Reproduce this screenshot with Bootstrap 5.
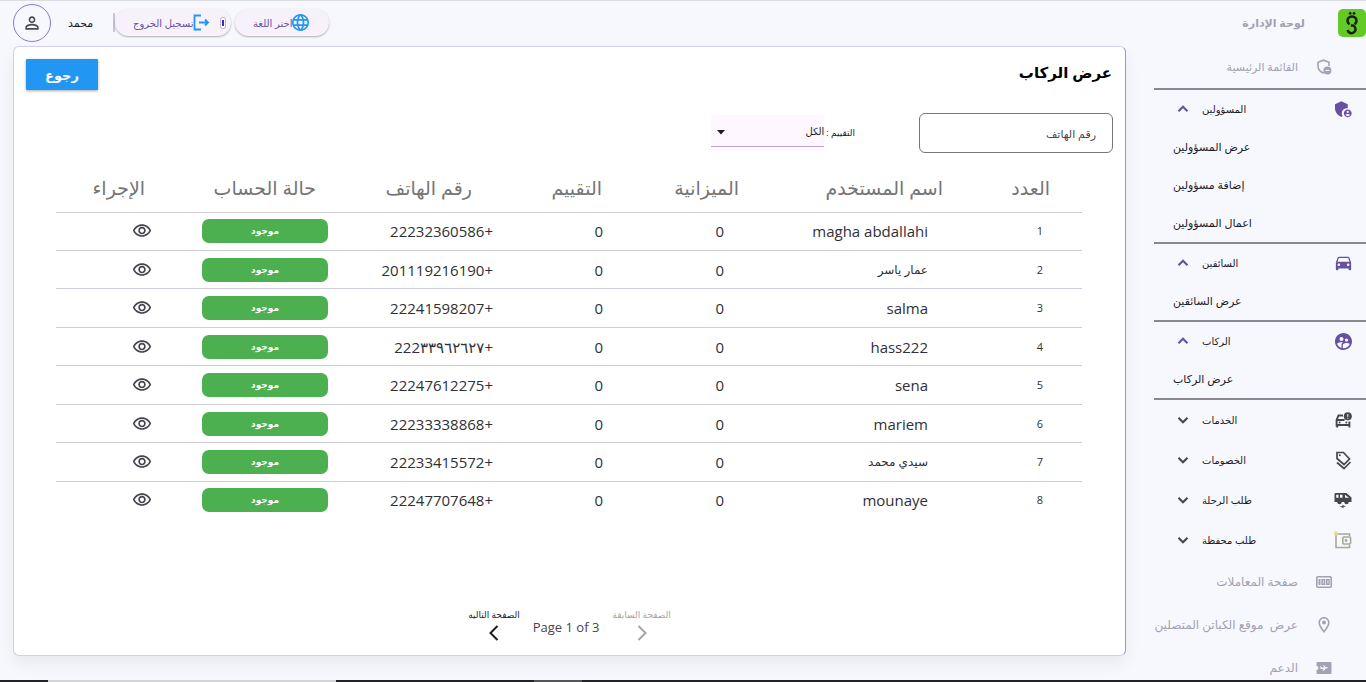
<!DOCTYPE html>
<html lang="ar" dir="rtl">
<head>
<meta charset="utf-8">
<meta name="viewport" content="width=device-width, initial-scale=1">
<title>لوحة الإدارة</title>
<link href="https://cdn.jsdelivr.net/npm/bootstrap@5.3.0/dist/css/bootstrap.min.css" rel="stylesheet">
<style>
  :root { --violet: #6750a4; --ink: #1c1b1f; --muted: #a3a1b3; --page: #f7f8fd; --rule: #8a8790; }
  body { font-family: "Open Sans", "DejaVu Sans", sans-serif; font-size: 11px; line-height: 16px; color: var(--ink); background: var(--page); border-top: 1px solid #dcdddf; height: 100vh; overflow: hidden; }
  svg { display: block; flex: none; fill: currentColor; }
  a { color: inherit; text-decoration: none; }
  .shell { min-height: 0; }

  /* side menu */
  .side { width: 212px; flex: none; overflow: hidden; }
  .side-title { height: 44px; flex: none; font-size: 11px; color: var(--muted); gap: 33px; }
  .plain-row { height: 43px; flex: none; color: var(--muted); padding-right: 34px; gap: 18px; white-space: nowrap; }
  .plain-row.lower { font-size: 12px; }
  .menu { border-top: 2px solid var(--rule); }
  .menu-group { border-bottom: 2px solid var(--rule); }
  .menu-head { height: 38px; width: 100%; flex: none; border: 0; background: none; padding: 0 14px 0 20px; gap: 10px; font-size: 10px; }
  .menu-head.closed { height: 40px; color: #49454f; }
  .menu-head span { color: var(--ink); }
  .menu-head.open { color: var(--violet); }
  .menu-sub { height: 38px; padding-left: 19px; }

  /* top bar */
  .topbar { height: 45px; padding: 0 0 2px 13px; }
  .avatar { width: 38px; height: 38px; border: 1px solid #8e74dc; color: #49454f; }
  .user-name { margin-left: 17px; width: 45px; }
  .bar-line { width: 2px; height: 19px; background: #cac4d0; }
  .pill { height: 27px; border: 0; border-radius: 14px; background: #f7f2fa; color: var(--violet); font-size: 10px; white-space: nowrap; box-shadow: 0 1px 2px rgba(0,0,0,.3); }
  .pill svg { color: #2196f3; }
  .pill-out { width: 116px; padding: 0 5px 0 18px; }
  .pill-lang { width: 94px; margin-left: 4px; padding: 0 0 0 18px; }

  /* content */
  .panel { margin: 0 28px 24px 13px; border: 1px solid #d5ccf3; border-right-color: #9a90dc; border-radius: 6px; background: #fff; box-shadow: 0 8px 16px rgba(0,0,0,.06); }
  .panel-head { padding: 12px 13px 0 12px; }
  .panel-title { font-size: 15px; font-weight: 700; line-height: 26px; color: #000; }
  .back-btn { width: 72px; height: 31px; border-radius: 1px; background: #2196f3; color: #fff; font-size: 13px; font-weight: 700; line-height: 20px; padding: 0; box-shadow: 0 1px 3px rgba(0,0,0,.35); }
  .back-btn:hover { background: #1e88e5; color: #fff; }
  .filters { padding: 23px 12px 0; gap: 64px; }
  .phone-box { width: 194px; height: 40px; border: 1px solid #79747e; border-radius: 6px; font-size: 11px; padding: 0 16px; }
  .phone-box::placeholder { color: #49454f; opacity: 1; }
  .rate-wrap { width: 113px; height: 36px; position: relative; background: #fef7ff; padding-bottom: 4px; }
  .rate-box { width: 100%; height: 32px; appearance: none; border: 0; border-bottom: 1px solid #bba8cc; background: transparent; font-size: 10px; color: var(--ink); padding: 0; }
  .rate-wrap svg { position: absolute; left: 5px; top: 15px; }
  .rate-label { font-size: 9px; margin-left: 2px; }

  .table-wrap { padding: 11px 43px 0 42px; }
  .riders { table-layout: fixed; height: 355px; }
  .riders th { height: 48px; font-size: 19px; line-height: 26px; font-weight: 400; color: #757575; padding: 0 32px 0 0; border-bottom: 1px solid #d0ccd8; white-space: nowrap; vertical-align: middle; text-align: right; }
  .riders td { padding: 0; font-size: 15px; line-height: 20px; color: #303036; vertical-align: middle; border-bottom: 1px solid #d0ccd8; }
  .riders tr:last-child td { border-bottom: 0; }
  .w-no { width: 107px; } .w-name { width: 204px; } .w-sum { width: 137px; } .w-rate { width: 130px; }
  .w-phone { width: 156px; } .w-state { width: 171px; } .w-act { width: 121px; }
  .riders .c-no { font-size: 11px; padding-right: 39px; }
  .riders .c-name, .riders .c-sum { padding-right: 47px; }
  .riders .c-rate { padding-right: 31px; }
  .riders .c-phone { padding-right: 11px; }
  .riders .c-state { padding-right: 20px; }
  .riders .c-act { padding-right: 25px; }
  .riders .ar-name { font-size: 12px; }
  .state-tag { width: 126px; height: 24px; border-radius: 7px; background: #4caf50; color: #fff; font-size: 9px; font-weight: 700; }
  .eye { display: block; border: 0; background: none; padding: 0; color: #49454f; }

  .pager { gap: 13px; padding-bottom: 10px; }
  .pager button { border: 0; background: none; padding: 0; font-size: 9px; line-height: 12px; color: var(--ink); }
  .pager button:disabled { color: #a5a5a5; }
  .pager-text { font-size: 13px; color: #49454f; }

  .strip { height: 2px; flex: none; background: #222326; padding-left: 48px; }
  .strip-a { width: 288px; background: #d4d4d4; }
  .strip-b { width: 48px; margin-left: 198px; background: #555; }
</style>
</head>
<body class="d-flex flex-column m-0">
<svg width="0" height="0" class="position-absolute" aria-hidden="true">
  <symbol id="more" viewBox="0 0 24 24"><path d="M6 9l6 6 6-6" fill="none" stroke="currentColor" stroke-width="2.8"/></symbol>
  <symbol id="less" viewBox="0 0 24 24"><path d="M6 15l6-6 6 6" fill="none" stroke="currentColor" stroke-width="2.8"/></symbol>
  <symbol id="eye" viewBox="0 0 24 24"><path d="M12 6c3.79 0 7.17 2.13 8.82 5.5C19.17 14.87 15.79 17 12 17s-7.17-2.13-8.82-5.5C4.83 8.13 8.21 6 12 6m0-2C7 4 2.73 7.11 1 11.5 2.73 15.89 7 19 12 19s9.27-3.11 11-7.5C21.27 7.11 17 4 12 4zm0 5c1.38 0 2.5 1.12 2.5 2.5S13.38 14 12 14s-2.5-1.12-2.5-2.5S10.62 9 12 9m0-2c-2.48 0-4.5 2.02-4.5 4.5S9.52 16 12 16s4.5-2.02 4.5-4.5S14.48 7 12 7z"/></symbol>
</svg>

<div class="shell d-flex flex-grow-1">
  <aside class="side d-flex flex-column" dir="ltr">
    <div class="side-title d-flex align-items-center justify-content-end">
      <strong dir="rtl">لوحة الإدارة</strong>
      <svg width="28" height="28" viewBox="0 0 28 28"><rect width="28" height="28" rx="5" fill="#62c925"/><g fill="none" stroke="#16211a" stroke-width="2.5"><path d="M11.600 15.200A4.500 4.200 0 1 1 16.400 15.200"/><path d="M12.800 16.400h2A4 4 0 1 1 9.600 21"/></g><circle cx="12.200" cy="4.400" r="1.400" fill="#16211a"/><circle cx="16" cy="4.400" r="1.400" fill="#16211a"/></svg>
    </div>
    <a href="#" class="plain-row d-flex align-items-center justify-content-end"><span dir="rtl">القائمة الرئيسية</span>
      <svg width="16" height="16" viewBox="0 0 16 16"><path d="M8 14.300C4.500 13 2 10.200 2 7V3.300L7.500 1.200 13 3.300V7" fill="none" stroke="currentColor" stroke-width="1.600"/><circle cx="11.400" cy="11.400" r="4"/><path d="M9.400 11.400h4" stroke="#f7f8fd" stroke-width="1"/></svg></a>

    <nav class="menu d-flex flex-column flex-shrink-0">
      <div class="menu-group">
        <button class="menu-head open d-flex align-items-center"><svg width="18" height="18"><use href="#less"/></svg><span>المسؤولين</span>
          <svg class="ms-auto" width="17" height="18" viewBox="1 2 20 20"><path d="M15 11c.34 0 .67.04 1 .09V6.270L8.500 3 1 6.270v4.910c0 4.540 3.200 8.790 7.500 9.820.550-.130 1.080-.320 1.600-.550-.690-.980-1.100-2.170-1.100-3.450 0-3.310 2.690-6 6-6z"/><path fill-rule="evenodd" d="M16 12.500c-2.500 0-4.600 2-4.600 4.600s2 4.600 4.600 4.600 4.600-2 4.600-4.600-2-4.600-4.600-4.600zm0 1.600a1.300 1.300 0 1 1 0 2.600 1.300 1.300 0 0 1 0-2.600zm0 6.200c-1.100 0-2-.5-2.600-1.300.1-.8 1.700-1.200 2.600-1.200s2.500.4 2.600 1.200c-.6.8-1.500 1.300-2.600 1.300z"/></svg></button>
        <a href="#" class="menu-sub d-flex align-items-center">عرض المسؤولين</a>
        <a href="#" class="menu-sub d-flex align-items-center">إضافة مسؤولين</a>
        <a href="#" class="menu-sub d-flex align-items-center">اعمال المسؤولين</a>
      </div>
      <div class="menu-group">
        <button class="menu-head open d-flex align-items-center"><svg width="18" height="18"><use href="#less"/></svg><span>السائقين</span>
          <svg class="ms-auto" width="17" height="17" viewBox="2 3 20 20"><path d="M18.920 6.010C18.720 5.420 18.160 5 17.500 5h-11c-.66 0-1.210.42-1.420 1.010L3 12v8c0 .55.45 1 1 1h1c.55 0 1-.45 1-1v-1h12v1c0 .55.45 1 1 1h1c.55 0 1-.45 1-1v-8l-2.080-5.990zM6.500 16c-.83 0-1.500-.67-1.500-1.500S5.670 13 6.500 13s1.500.67 1.500 1.500S7.330 16 6.500 16zm11 0c-.83 0-1.500-.67-1.500-1.500s.67-1.500 1.500-1.500 1.500.67 1.500 1.500-.67 1.500-1.500 1.500zM5 11l1.500-4.500h11L19 11H5z"/></svg></button>
        <a href="#" class="menu-sub d-flex align-items-center">عرض السائقين</a>
      </div>
      <div class="menu-group">
        <button class="menu-head open d-flex align-items-center"><svg width="18" height="18"><use href="#less"/></svg><span>الركاب</span>
          <svg class="ms-auto" width="17" height="17" viewBox="2 2 20 20"><path d="M11.990 2c-5.520 0-10 4.480-10 10s4.480 10 10 10 10-4.480 10-10-4.480-10-10-10zm3.610 6.340c1.070 0 1.930.86 1.930 1.930s-.86 1.930-1.930 1.930-1.930-.86-1.930-1.930c-.01-1.070.86-1.930 1.930-1.930zm-6-1.580c1.300 0 2.360 1.060 2.360 2.360s-1.060 2.360-2.360 2.360-2.360-1.060-2.360-2.360c0-1.310 1.050-2.360 2.360-2.360zm0 9.130v3.750c-2.400-.75-4.300-2.600-5.140-4.960 1.050-1.120 3.670-1.690 5.140-1.690.53 0 1.200.08 1.900.22-1.640.87-1.900 2.020-1.900 2.680zM11.990 20c-.27 0-.53-.01-.79-.04v-4.070c0-1.420 2.940-2.130 4.400-2.130 1.070 0 2.920.39 3.840 1.150-1.170 2.970-4.060 5.090-7.450 5.090z"/></svg></button>
        <a href="#" class="menu-sub d-flex align-items-center">عرض الركاب</a>
      </div>
      <button class="menu-head closed d-flex align-items-center"><svg width="18" height="18"><use href="#more"/></svg><span>الخدمات</span>
        <svg class="ms-auto" width="17" height="17" viewBox="0 0 17 17"><path d="M8 3.500H3.500L1.600 8v6.500M1.600 13h12.800V9.500M1.600 8h8M14.400 13v2.500M2.200 13v2.500" fill="none" stroke="currentColor" stroke-width="1.900"/><circle cx="4.600" cy="10.500" r="1"/><circle cx="11.400" cy="10.500" r="1"/><circle cx="12.800" cy="4.200" r="4"/><path d="M12.800 2v2.800M12.800 5.600v1" stroke="#f7f8fd"/></svg></button>
      <button class="menu-head closed d-flex align-items-center"><svg width="18" height="18"><use href="#more"/></svg><span>الخصومات</span>
        <svg class="ms-auto" width="17" height="19" viewBox="0 0 17 19"><path d="M2 1.500h6.500l6 6.500-5.500 5.500L2 7.500zM2 11.500l7 6 6.500-6.500" fill="none" stroke="currentColor" stroke-width="1.700"/><circle cx="4.800" cy="4.200" r="1"/></svg></button>
      <button class="menu-head closed d-flex align-items-center"><svg width="18" height="18"><use href="#more"/></svg><span>طلب الرحلة</span>
        <svg class="ms-auto" width="18" height="17" viewBox="0 0 18 17"><path d="M1.500 1h11l5 4.500V10h-2.800a2.200 2.200 0 0 1-4.400 0H7.700a2.200 2.200 0 0 1-4.400 0H.5V2a1 1 0 0 1 1-1zM2.200 2.700v3h2.300v-3zM6 2.700v3h2.500v-3zM11 2.700v3h4z" fill-rule="evenodd"/><circle cx="5.500" cy="10.200" r="1.700"/><circle cx="12.500" cy="10.200" r="1.700"/><path d="M5.500 14.200h3v-1.500l3.500 2H9.500v1.600z"/></svg></button>
      <button class="menu-head closed d-flex align-items-center"><svg width="18" height="18"><use href="#more"/></svg><span>طلب محفظة</span>
        <svg class="ms-auto" width="18" height="18" viewBox="0 0 18 18"><g fill="none" stroke="#a5a89c" stroke-width="1.600"><path d="M15.500 5V3H2v13.500h13.500V14"/><rect x="8.800" y="6" width="7.800" height="7" rx="1"/></g><circle cx="12" cy="9.500" r="1.400" fill="#a5a89c"/><circle cx="2" cy="2.200" r="2.200" fill="#f3d98a" fill-opacity=".8"/></svg></button>
    </nav>
    <a href="#" class="plain-row lower d-flex align-items-center justify-content-end"><span dir="rtl">صفحة المعاملات</span>
      <svg width="16" height="16" viewBox="0 0 16 16"><rect x=".8" y="2.800" width="14.400" height="10.400" rx="1" fill="none" stroke="currentColor" stroke-width="1.600"/><path d="M2.500 5h2v6h-2zM5.300 5h4v6h-4zM10 5h3.700v6H10z"/><path d="M7.300 6.500v3M11.900 6.500v3" stroke="#f7f8fd" stroke-width=".8"/></svg></a>
    <a href="#" class="plain-row lower d-flex align-items-center justify-content-end"><span dir="rtl">عرض&nbsp; موقع الكباتن المتصلين</span>
      <svg width="16" height="16" viewBox="2 2 20 20"><path d="M12 2C8.130 2 5 5.130 5 9c0 5.250 7 13 7 13s7-7.750 7-13c0-3.870-3.130-7-7-7zM7 9c0-2.760 2.240-5 5-5s5 2.240 5 5c0 2.880-2.880 7.190-5 9.880C9.920 16.210 7 11.850 7 9z"/><circle cx="12" cy="9" r="2.500"/></svg></a>
    <a href="#" class="plain-row lower d-flex align-items-center justify-content-end"><span dir="rtl">الدعم</span>
      <svg width="16" height="16" viewBox="0 0 16 16"><path d="M1.500 2h13a1 1 0 0 1 1 1v10a1 1 0 0 1-1 1h-13a1 1 0 0 1-1-1v-3a2 2 0 0 0 0-4V3a1 1 0 0 1 1-1z"/><path d="M4.500 8.300l7-.6M7.500 5.500l2 2.500-2.500 2.500M4.500 6.500l1 1.800" fill="none" stroke="#f7f8fd" stroke-width="1.200"/></svg></a>
  </aside>

  <main class="d-flex flex-column flex-grow-1">
    <header class="topbar d-flex align-items-center" dir="ltr">
      <button class="avatar rounded-circle bg-transparent d-flex align-items-center justify-content-center p-0" aria-label="الحساب"><svg width="20" height="20" viewBox="0 0 24 24"><path d="M12 5.900c1.160 0 2.100.94 2.100 2.100s-.94 2.100-2.100 2.100S9.900 9.160 9.900 8s.94-2.100 2.100-2.100m0 9c2.970 0 6.100 1.460 6.100 2.100v1.100H5.900V17c0-.64 3.130-2.100 6.100-2.100M12 4C9.790 4 8 5.790 8 8s1.790 4 4 4 4-1.790 4-4-1.790-4-4-4zm0 9c-2.670 0-8 1.340-8 4v3h16v-3c0-2.660-5.330-4-8-4z"/></svg></button>
      <span class="user-name">محمد</span>
      <span class="bar-line"></span>
      <button class="pill pill-out d-flex align-items-center"><span>تسجيل الخروج</span>
        <svg width="17" height="17" viewBox="0 0 17 17"><path d="M8 1.500H1.500v14H8M6 8.500h9M12 5.500l3 3-3 3" fill="none" stroke="currentColor" stroke-width="1.800"/></svg>
        <svg class="ms-auto" width="6" height="12" viewBox="0 0 6 12"><rect x=".5" y=".5" width="5" height="11" rx="2" fill="#fff" stroke="#b9b2dd"/><rect x="2" y="3" width="2" height="6" fill="#3d28c0"/></svg></button>
      <button class="pill pill-lang d-flex align-items-center"><span>اختر اللغة</span>
        <svg width="17" height="17" viewBox="2 2 20 20"><path d="M11.990 2C6.470 2 2 6.480 2 12s4.470 10 9.990 10C17.520 22 22 17.520 22 12S17.520 2 11.990 2zm6.930 6h-2.950c-.32-1.250-.78-2.450-1.380-3.560 1.840.63 3.370 1.910 4.330 3.560zM12 4.040c.83 1.200 1.480 2.530 1.910 3.960h-3.820c.43-1.430 1.080-2.760 1.910-3.960zM4.260 14C4.100 13.360 4 12.690 4 12s.1-1.360.26-2h3.380c-.08.66-.14 1.320-.14 2 0 .68.06 1.340.14 2H4.260zm.82 2h2.950c.32 1.250.78 2.450 1.380 3.560-1.840-.63-3.370-1.900-4.330-3.560zm2.950-8H5.080c.96-1.660 2.490-2.930 4.330-3.560C8.810 5.550 8.350 6.750 8.030 8zM12 19.960c-.83-1.200-1.480-2.530-1.910-3.960h3.820c-.43 1.430-1.080 2.760-1.910 3.960zM14.340 14H9.660c-.09-.66-.16-1.320-.16-2 0-.68.07-1.350.16-2h4.680c.09.65.16 1.320.16 2 0 .68-.07 1.340-.16 2zm.25 5.560c.6-1.110 1.060-2.310 1.380-3.560h2.950c-.96 1.650-2.490 2.930-4.330 3.560zM16.360 14c.08-.66.14-1.320.14-2 0-.68-.06-1.340-.14-2h3.380c.16.64.26 1.310.26 2s-.1 1.360-.26 2h-3.380z"/></svg></button>
    </header>

    <section class="panel d-flex flex-column flex-grow-1">
      <div class="panel-head d-flex justify-content-between">
        <h1 class="panel-title m-0">عرض الركاب</h1>
        <button class="back-btn btn border-0">رجوع</button>
      </div>
      <div class="filters d-flex">
        <input class="phone-box" type="text" placeholder="رقم الهاتف" aria-label="رقم الهاتف">
        <div class="d-flex align-items-center">
          <label class="rate-label" for="rate">التقييم :</label>
          <div class="rate-wrap"><select class="rate-box" id="rate"><option>الكل</option></select><svg width="10" height="5" viewBox="0 0 10 5" fill="#49454f"><path d="M1 0h8L5 4.500z"/></svg></div>
        </div>
      </div>
      <div class="table-wrap">
        <table class="riders w-100">
          <colgroup><col class="w-no"><col class="w-name"><col class="w-sum"><col class="w-rate"><col class="w-phone"><col class="w-state"><col class="w-act"></colgroup>
          <thead><tr><th>العدد</th><th>اسم المستخدم</th><th>الميزانية</th><th>التقييم</th><th>رقم الهاتف</th><th>حالة الحساب</th><th>الإجراء</th></tr></thead>
          <tbody id="rows"></tbody>
        </table>
      </div>
      <div class="pager d-flex align-items-center justify-content-center mt-auto">
        <button class="d-flex flex-column align-items-center" disabled><span>الصفحة السابقة</span><svg width="24" height="24" viewBox="0 0 24 24"><path d="M8.500 5l7 7-7 7" fill="none" stroke="currentColor" stroke-width="2"/></svg></button>
        <span class="pager-text" dir="ltr">Page 1 of 3</span>
        <button class="d-flex flex-column align-items-center"><span>الصفحة التاليه</span><svg width="24" height="24" viewBox="0 0 24 24"><path d="M15.500 5l-7 7 7 7" fill="none" stroke="currentColor" stroke-width="2"/></svg></button>
      </div>
    </section>
  </main>
</div>
<div class="strip d-flex" dir="ltr"><div class="strip-a"></div><div class="strip-b"></div></div>

<script src="https://cdn.jsdelivr.net/npm/bootstrap@5.3.0/dist/js/bootstrap.bundle.min.js"></script>
<script>
  const riders = [
    ['magha abdallahi', '+22232360586'], ['عمار ياسر', '+201119216190'], ['salma', '+22241598207'],
    ['hass222', '+222٣٣٩٦٢٦٢٧'], ['sena', '+22247612275'], ['mariem', '+22233338868'],
    ['سيدي محمد', '+22233415572'], ['mounaye', '+22247707648']
  ];
  document.getElementById('rows').innerHTML = riders.map(([name, phone], i) => `<tr>
    <td class="c-no">${i + 1}</td>
    <td class="c-name ${/[a-z]/.test(name) ? '' : 'ar-name'}">${name}</td>
    <td class="c-sum">0</td><td class="c-rate">0</td><td class="c-phone">${phone}</td>
    <td class="c-state"><div class="state-tag d-flex align-items-center justify-content-center">موجود</div></td>
    <td class="c-act"><button class="eye" aria-label="عرض"><svg width="20" height="20"><use href="#eye"/></svg></button></td>
  </tr>`).join('');
</script>
</body>
</html>
